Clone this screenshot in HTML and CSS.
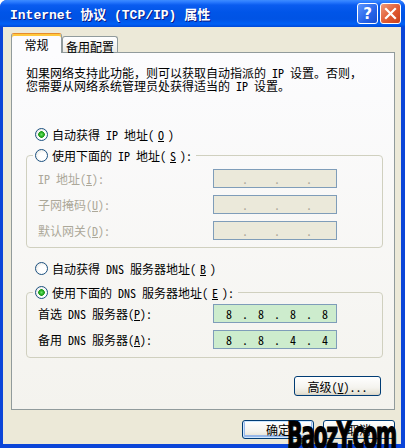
FILE: index.html
```html
<!DOCTYPE html>
<html lang="zh-CN">
<head>
  <meta charset="UTF-8" />
  <title>Internet 协议 (TCP/IP) 属性</title>
  <link rel="stylesheet" href="styles.css">
</head>
<body>
  <div class="window">
    <div class="titlebar">
      <span class="title">Internet 协议 (TCP/IP) 属性</span>
      <div class="caption-btns">
        <div class="cap-btn help">?</div>
        <div class="cap-btn close">
          <svg width="19" height="19" viewBox="0 0 19 19">
            <path d="M5 5 L14 14 M14 5 L5 14" stroke="#fff" stroke-width="2.2" stroke-linecap="square"/>
          </svg>
        </div>
      </div>
    </div>

    <div class="client">
      <div class="tabs">
        <div class="tab active">常规</div>
        <div class="tab">备用配置</div>
      </div>

      <div class="panel">
        <p class="intro">如果网络支持此功能，则可以获取自动指派的 IP 设置。否则，<br>您需要从网络系统管理员处获得适当的 IP 设置。</p>

        <div class="radio first checked"><span class="dot-box"></span>自动获得 IP 地址(<u>O</u>)</div>

        <fieldset class="group ip-group">
          <legend><div class="radio"><span class="dot-box"></span>使用下面的 IP 地址(<u>S</u>):</div></legend>
          <div class="field-row disabled">
            <label>IP 地址(<u>I</u>):</label>
            <div class="ip-box"><span class="octet"></span><span class="sep">.</span><span class="octet"></span><span class="sep">.</span><span class="octet"></span><span class="sep">.</span><span class="octet"></span></div>
          </div>
          <div class="field-row disabled">
            <label>子网掩码(<u>U</u>):</label>
            <div class="ip-box"><span class="octet"></span><span class="sep">.</span><span class="octet"></span><span class="sep">.</span><span class="octet"></span><span class="sep">.</span><span class="octet"></span></div>
          </div>
          <div class="field-row disabled">
            <label>默认网关(<u>D</u>):</label>
            <div class="ip-box"><span class="octet"></span><span class="sep">.</span><span class="octet"></span><span class="sep">.</span><span class="octet"></span><span class="sep">.</span><span class="octet"></span></div>
          </div>
        </fieldset>

        <div class="radio dns-auto"><span class="dot-box"></span>自动获得 DNS 服务器地址(<u>B</u>)</div>

        <fieldset class="group dns-group">
          <legend><div class="radio checked"><span class="dot-box"></span>使用下面的 DNS 服务器地址(<u>E</u>):</div></legend>
          <div class="field-row">
            <label>首选 DNS 服务器(<u>P</u>):</label>
            <div class="ip-box dns"><span class="octet">8</span><span class="sep">.</span><span class="octet">8</span><span class="sep">.</span><span class="octet">8</span><span class="sep">.</span><span class="octet">8</span></div>
          </div>
          <div class="field-row">
            <label>备用 DNS 服务器(<u>A</u>):</label>
            <div class="ip-box dns"><span class="octet">8</span><span class="sep">.</span><span class="octet">8</span><span class="sep">.</span><span class="octet">4</span><span class="sep">.</span><span class="octet">4</span></div>
          </div>
        </fieldset>

        <button class="xp-btn advanced">高级(<u>V</u>)...</button>
      </div>

      <div class="footer">
        <button class="xp-btn default">确定</button>
        <button class="xp-btn">取消</button>
      </div>
    </div>
  </div>

  <div class="watermark">BaozY.com</div>
</body>
</html>
```

FILE: styles.css
```css
* {
  box-sizing: border-box;
}

body {
  position: relative;
  margin: 0;
  width: 408px;
  height: 448px;
  overflow: hidden;
  background: #fff;
  font-family: "Noto Sans Mono CJK SC", "Noto Sans CJK SC", sans-serif;
  font-size: 12px;
  color: #000;
}

.window {
  width: 405px;
  height: 448px;
  display: flex;
  flex-direction: column;
  border-radius: 7px 7px 0 0;
  background: #0b45d8;
  overflow: hidden;
}

/* title bar */
.titlebar {
  flex: none;
  height: 27px;
  display: flex;
  align-items: center;
  padding: 0 4px 0 10px;
  background: linear-gradient(#3d8cff 0, #2a7bff 2px, #0a5cf0 5px, #0055e8 12px, #0053e4 19px, #0060f6 24px, #0049d8 27px);
}

.title {
  flex: 1;
  color: #fff;
  font-family: "Liberation Mono", "Noto Sans CJK SC", monospace;
  font-weight: bold;
  font-size: 13px;
  text-shadow: 1px 1px #0a1883;
}

.caption-btns {
  display: flex;
  gap: 2px;
}

.cap-btn {
  width: 21px;
  height: 21px;
  border: 1px solid #fff;
  border-radius: 3px;
  display: flex;
  align-items: center;
  justify-content: center;
  color: #fff;
}

.help {
  background: linear-gradient(135deg, #5b95ff, #2663e8 60%, #1a4fd0);
  font-family: "DejaVu Sans", sans-serif;
  font-weight: bold;
  font-size: 15px;
}

.close {
  background: linear-gradient(135deg, #f09a7c, #e05a32 55%, #c8401c);
}

/* client area */
.client {
  flex: 1;
  margin: 0 4px 4px 3px;
  padding: 6px 6px 0 8px;
  background: #ece9d8;
}

.tabs {
  display: flex;
  align-items: flex-end;
  height: 19px;
}

.tab {
  width: 56px;
  height: 16px;
  padding-top: 3px;
  border: 1px solid #919b9c;
  border-bottom: 0;
  border-radius: 3px 3px 0 0;
  background: linear-gradient(#fff, #ecebe6);
  text-align: center;
  line-height: 13px;
}

.tab.active {
  position: relative;
  z-index: 1;
  width: 51px;
  height: 20px;
  margin-bottom: -1px;
  padding-top: 4px;
  border-top-color: #e68b2c;
  background: #fcfcfe;
  box-shadow: inset 0 2px #ffc83c;
}

.panel {
  width: 384px;
  height: 358px;
  display: flex;
  flex-direction: column;
  align-items: flex-start;
  padding: 13px 11px 0 14px;
  border: 1px solid #919b9c;
  background: linear-gradient(#fcfcfe, #f4f3ee);
}

.intro {
  margin: 0;
  line-height: 13px;
}

/* radio buttons */
.radio {
  display: flex;
  align-items: center;
  gap: 4px;
  height: 13px;
  line-height: 13px;
  white-space: nowrap;
}

.panel > .radio {
  margin-left: 9px;
}

.radio.first {
  margin-top: 36px;
}

.radio.dns-auto {
  margin-top: 14px;
}

.dot-box {
  width: 13px;
  height: 13px;
  flex: none;
  border: 1px solid #1c5180;
  border-radius: 50%;
  background: radial-gradient(circle at 60% 60%, #fff 40%, #dcdcd7 100%);
}

.radio.checked .dot-box {
  background: radial-gradient(circle, #6ee86a 0, #2db12a 2px, #1f9b1c 3px, transparent 3.6px),
    radial-gradient(circle at 60% 60%, #fff 40%, #dcdcd7 100%);
}

u {
  text-decoration-thickness: 1px;
  text-underline-offset: 1px;
}

/* group boxes */
.group {
  width: 357px;
  margin: 0;
  padding: 0 0 7px 0;
  border: 1px solid #d0d0bf;
  border-radius: 4px;
}

.ip-group {
  margin-top: 8px;
}

.dns-group {
  margin-top: 11px;
  padding-bottom: 8px;
}

.group legend {
  margin-left: 6px;
  padding: 0 4px 0 2px;
}

.field-row {
  display: flex;
  align-items: center;
  height: 19px;
  margin: 7px 0 0 11px;
}

.dns-group .field-row:first-of-type {
  margin-top: 5px;
}

.field-row label {
  width: 175px;
  white-space: nowrap;
}

.field-row.disabled label {
  color: #aca899;
}

.ip-box {
  width: 124px;
  height: 19px;
  display: flex;
  padding-left: 2px;
  border: 1px solid #7f9db9;
  background: #ebe9da;
  color: #aca899;
  line-height: 17px;
  overflow: hidden;
}

.ip-box.dns {
  background: #cdeccd;
  color: #000;
}

.octet {
  width: 26px;
  flex: none;
  text-align: center;
}

.sep {
  width: 6px;
  flex: none;
  text-align: center;
}

/* buttons */
.xp-btn {
  height: 19px;
  padding: 0;
  border: 1px solid #003c74;
  border-radius: 3px;
  background: linear-gradient(#fff, #f4f3ee 60%, #e6e3d6 90%, #d6d0c5);
  font-family: inherit;
  font-size: 12px;
  color: #000;
  line-height: 17px;
}

.advanced {
  align-self: flex-end;
  width: 87px;
  height: 20px;
  margin: 18px 2px 0 0;
}

.footer {
  display: flex;
  justify-content: flex-end;
  gap: 9px;
  margin-top: 10px;
}

.footer .xp-btn {
  width: 72px;
}

.xp-btn.default {
  box-shadow: inset 0 0 0 1px #cee7ff, inset 0 -1px 0 2px #98b8ea;
}

/* watermark over the dialog buttons */
.watermark {
  position: absolute;
  left: 287px;
  top: 417px;
  font-family: "DejaVu Sans", sans-serif;
  font-weight: bold;
  font-stretch: condensed;
  font-size: 37px;
  letter-spacing: -2.5px;
  line-height: 1;
  color: #000;
  -webkit-text-stroke: 1.2px #000;
  transform: scaleX(0.62);
  transform-origin: left top;
}
```
